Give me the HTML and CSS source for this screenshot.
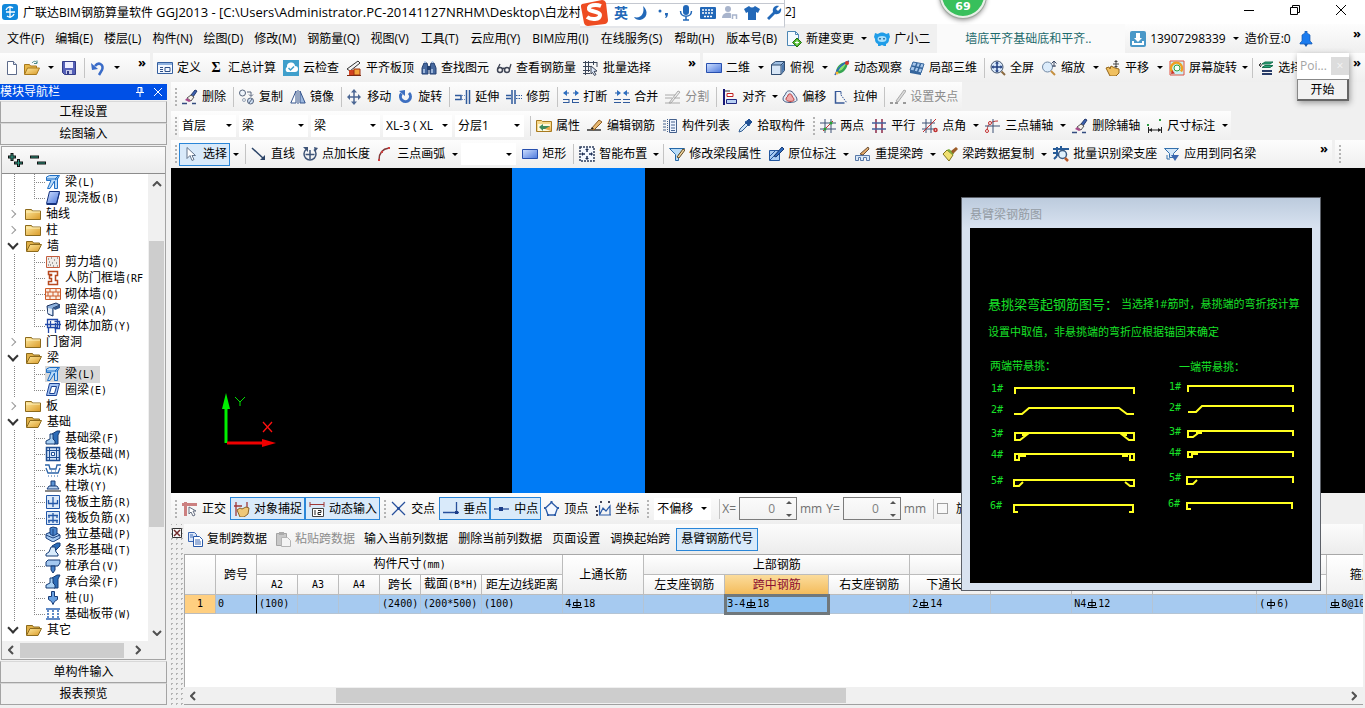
FILE: index.html
```html
<!DOCTYPE html>
<html lang="zh-CN">
<head>
<meta charset="utf-8">
<title>广联达BIM钢筋算量软件 GGJ2013</title>
<link rel="stylesheet" href="styles.css">
</head>
<body>
<svg class="sprite" aria-hidden="true">
  <defs>
    <linearGradient id="gold" x1="0" y1="0" x2="1" y2="1"><stop offset="0" stop-color="#ffeaa0"/><stop offset="1" stop-color="#d99a28"/></linearGradient>
    <linearGradient id="blue" x1="0" y1="0" x2="1" y2="1"><stop offset="0" stop-color="#cfe0ff"/><stop offset="1" stop-color="#4c78dc"/></linearGradient>
  </defs>
  <symbol id="new" viewBox="0 0 16 16"><path d="M3.500 1.500h6l3 3v10h-9z" fill="#fff" stroke="#5d6b8a"/><path d="M9.500 1.500v3h3" fill="#dde6f5" stroke="#5d6b8a"/></symbol>
  <symbol id="open" viewBox="0 0 16 16"><path d="M.5 14V4.500h5l1 1.500h6v3" fill="#e8b84a" stroke="#a8791c"/><path d="M.5 14.500l3-6.500h12l-3 6.500z" fill="url(#gold)" stroke="#a8791c"/><path d="M8 3c2-2.500 4-2 5 0m0-2.500v3h-3" fill="none" stroke="#4a8a8a"/></symbol>
  <symbol id="save" viewBox="0 0 16 16"><path d="M1.500 1.500h13v13h-11l-2-2z" fill="#5560b8" stroke="#333c88"/><path d="M4 2h8v6H4z" fill="#eef"/><path d="M5 10h6v4H5z" fill="#c9cdea"/><path d="M6 11h2v3H6z" fill="#333c88"/></symbol>
  <symbol id="undo" viewBox="0 0 16 16"><path d="M5 6c4-5 9-1 7 4l-3 5" fill="none" stroke="#3a6cc8" stroke-width="2.500"/><path d="M1 3l1 7 6-1z" fill="#3a6cc8"/></symbol>
  <symbol id="define" viewBox="0 0 16 16"><path d="M.5 2.500h15v11H.5z" fill="#f4f8ff" stroke="#355f9f"/><path d="M1 3h14v2H1z" fill="#8fb2e0"/><path d="M3 7.500h3M3 9.500h3M3 11.500h3M8 7.500h5v4H8z" fill="none" stroke="#2d4f86"/></symbol>
  <symbol id="cloud" viewBox="0 0 16 16"><path d="M0 0h16v16H0z" fill="#3f9fcb"/><path d="M4 12a3 3 0 010-5 4 4 0 018-1 3 3 0 010 6z" fill="#fff"/><path d="M5.500 8l2 2 3.500-3.500" fill="none" stroke="#3f9fcb" stroke-width="1.500"/></symbol>
  <symbol id="level" viewBox="0 0 16 16"><path d="M1 9L12 1l2 2-10 8z" fill="#f4f4f4" stroke="#333"/><path d="M3 10h5v5H3z" fill="#d04020"/><path d="M8 9h6v6H8z" fill="#f2a33a" stroke="#9c3010"/><path d="M1 15.500h14" stroke="#7a2a10"/></symbol>
  <symbol id="bino" viewBox="0 0 16 16"><path d="M3 3h3l1 4v7H1V8zM10 3h3l2 5v6H9V7z" fill="#46689e" stroke="#223f70"/><path d="M6 6h4v4H6z" fill="#223f70"/><path d="M3 9v4M11 9v4M4 1v2M11.500 1v2" stroke="#b8cdec" stroke-width="1.500"/></symbol>
  <symbol id="glasses" viewBox="0 0 16 16"><circle cx="4" cy="10" r="2.500" fill="none" stroke="#3e4454" stroke-width="1.500"/><circle cx="11" cy="10" r="2.500" fill="none" stroke="#3e4454" stroke-width="1.500"/><path d="M6 9q1.500-1.500 3 0M1.500 9L4 4M13.500 9L15 4" fill="none" stroke="#3e4454" stroke-width="1.300"/></symbol>
  <symbol id="batch" viewBox="0 0 16 16"><path d="M2.500 1v14M5.500 1v11M0 2.500h14M0 6.500h8M0 10.500h7M0 13.500h7M10.500 1v4M14 2v5" stroke="#3c4658"/><path d="M8 6l6 5-3 .5 2 3-1.500 1-2-3L8 14z" fill="#dfe9f8" stroke="#3c4658"/></symbol>
  <symbol id="rect" viewBox="0 0 16 16"><path d="M.5 3.500h15v9H.5z" fill="url(#blue)" stroke="#274fae"/></symbol>
  <symbol id="cube" viewBox="0 0 16 16"><path d="M1.500 4.500l4-3h9v9l-3.500 4h-9.500z" fill="#9dbde0" stroke="#304c70"/><path d="M1.500 5h9.500v9.500H1.500z" fill="#d7e6f6" stroke="#304c70"/><path d="M11 5l3.500-3.500" stroke="#304c70"/><path d="M12 5l2-2v7l-2 3z" fill="#4c78ae"/></symbol>
  <symbol id="orbit" viewBox="0 0 16 16"><path d="M2 11c1-5 5-9 11-9 2 3-2 10-6 11-2 1-5 0-5-2z" fill="#36a552"/><path d="M4 9c2-4 5-5 8-5-2 3-3 6-7 7z" fill="#8ce070"/><path d="M1 15C4 8 9 3 15 1" fill="none" stroke="#2b62c4" stroke-width="1.500"/><circle cx="13" cy="3" r="2" fill="#d33b2c"/><circle cx="3" cy="13" r="1.500" fill="#f7b52c"/></symbol>
  <symbol id="part3d" viewBox="0 0 16 16"><path d="M4 2l11 2-3 9-11-3z" fill="#a8c8ec" stroke="#35659c"/><path d="M8 3l-3 8M11.500 4l-3 8M3 6l11 2.500" fill="none" stroke="#35659c" stroke-width="1.500"/><path d="M1 10v3l11 2v-2z" fill="#35659c"/></symbol>
  <symbol id="full" viewBox="0 0 16 16"><circle cx="7" cy="7" r="6" fill="#d7e7fa" stroke="#45566e"/><path d="M11.500 11.500L15 15" stroke="#8a6a40" stroke-width="2"/><path d="M7 2.500v9M2.500 7h9" stroke="#223f80" stroke-width="1.500"/><path d="M7 1.500l2 2H5zM7 12.500l2-2H5zM1.500 7l2-2v4zM12.500 7l-2-2v4z" fill="#223f80"/></symbol>
  <symbol id="zoomi" viewBox="0 0 16 16"><circle cx="6.500" cy="7" r="5" fill="#dcecfb" stroke="#7188a4"/><path d="M10 11l4 4" stroke="#c59040" stroke-width="2"/><path d="M13 1v6M10.500 3.500L13 1l2.500 2.500M11 6h4" fill="none" stroke="#3c4a66"/></symbol>
  <symbol id="hand" viewBox="0 0 16 16"><path d="M1 8l3-1 1 2 1-3 2 1 2 1 4 1v4l-3 3H5z" fill="#f0c060" stroke="#94661a"/><path d="M11 1v6M8 4h6" stroke="#444"/><path d="M11 0l2 2H9zM11 8l2-2H9z" fill="#444"/></symbol>
  <symbol id="rot" viewBox="0 0 16 16"><path d="M1 1h14v14H1z" fill="#c9f2f7" stroke="#e05040"/><path d="M3.500 12A5.500 5.500 0 1112 11.500" fill="none" stroke="#f0a020" stroke-width="2.500"/><circle cx="8" cy="8" r="3" fill="#f6fff6" stroke="#30a040"/><path d="M3 10l-1 4 4-.5z" fill="#d03028"/></symbol>
  <symbol id="sel" viewBox="0 0 16 16"><path d="M4 4l3-2h8l-3 2zM4 7.500l3-2h8l-3 2z" fill="#28a878" stroke="#187050"/><path d="M4 11h10M4 14h10" stroke="#283c68" stroke-width="2"/><path d="M1 5h3M1 5l2-2M1 5l2 2" stroke="#333" fill="none"/></symbol>
  <symbol id="brush" viewBox="0 0 16 16"><path d="M9 6l4-5 2 1-4 6z" fill="#3d62b0" stroke="#22386c"/><path d="M5 9l4-3 3 2-3 4z" fill="#f4f0e8" stroke="#555"/><path d="M3 11l2-2 4 3-2 1z" fill="#a84a8a"/><path d="M0 14.500h5M10 14.500h4" stroke="#334c80" stroke-width="1.500"/></symbol>
  <symbol id="copy" viewBox="0 0 16 16"><circle cx="3.500" cy="4" r="3" fill="#eef4fb" stroke="#56647c"/><circle cx="11.500" cy="12" r="3" fill="#cfe0f5" stroke="#56647c"/><path d="M10 14l3-4" stroke="#56647c"/><circle cx="5" cy="11" r="1.500" fill="none" stroke="#9aa6b8"/><path d="M8 3h4v4M10 5.500l2 2 2-2" fill="none" stroke="#56647c"/></symbol>
  <symbol id="mirror" viewBox="0 0 16 16"><path d="M6 2v12H.800z" fill="#fff" stroke="#35548c"/><path d="M10 2v12h5.200z" fill="#9db8de" stroke="#35548c"/><path d="M8 1v14" stroke="#35548c"/></symbol>
  <symbol id="move" viewBox="0 0 16 16"><path d="M7 2v12M1 8h12" stroke="#4c6794" stroke-width="1.500"/><path d="M7 0l3 3.500H4zM7 16l3-3.500H4zM0 8l3-3v6zM14 8l-3-3v6z" fill="#4c6794"/></symbol>
  <symbol id="rotate" viewBox="0 0 16 16"><path d="M3.500 4.500A5 5 0 1011 4" fill="none" stroke="#3d6fc0" stroke-width="3"/><path d="M7 1v6L1 2z" fill="#3d6fc0"/></symbol>
  <symbol id="extend" viewBox="0 0 16 16"><path d="M0 6.500h6v4H0" fill="none" stroke="#2f5a9c" stroke-width="1.500"/><path d="M7 6.500h4M7 10.500h4" stroke="#6f8fc0" stroke-dasharray="1 1"/><path d="M11.500 1v14M14.500 1v14" stroke="#2f5a9c" stroke-width="1.500"/></symbol>
  <symbol id="trim" viewBox="0 0 16 16"><path d="M0 6.500h5M0 9.500h5" stroke="#2f5a9c" stroke-width="1.500"/><path d="M6 1v14M9 1v14" stroke="#2f5a9c" stroke-width="1.500"/><path d="M10 6.500h6M10 9.500h6" stroke="#2f5a9c" stroke-dasharray="1.500 1"/></symbol>
  <symbol id="break" viewBox="0 0 16 16"><path d="M0 10.500h6M0 13.500h6M9 10.500h7M9 13.500h7M6 10v4M9.500 10v4M1 4h5M10 4h5" stroke="#2f5a9c"/><path d="M4 1v6L0 4zM12 1v6l4-3z" fill="#2f6fc0"/></symbol>
  <symbol id="join" viewBox="0 0 16 16"><path d="M0 10.500h7M0 13.500h7M9 10.500h7M9 13.500h7M1 4h5M10 4h5" stroke="#2f5a9c"/><path d="M3 1v6l4-3zM13 1v6L9 4z" fill="#2f6fc0"/></symbol>
  <symbol id="split" viewBox="0 0 16 16"><path d="M0 6h10M0 9h7M0 14h15M9 9h6M4 14l9-12 2 1-9 11z" fill="#eee" stroke="#aaa"/></symbol>
  <symbol id="align" viewBox="0 0 16 16"><path d="M2 0v16" stroke="#181878" stroke-width="2"/><path d="M5 4.500h6v3H5z" fill="#fff" stroke="#c22020"/><path d="M4.500 10.500h10v4h-10z" fill="#b8d0f4" stroke="#202880"/><path d="M3 2h5" stroke="#333"/></symbol>
  <symbol id="offset" viewBox="0 0 16 16"><path d="M1 10c0-3 2-3 3-6s6-3 8 1c1 2 3 3 3 6s-14 4-14-1z" fill="#e4ecf6" stroke="#4a5f84"/><path d="M4 10c0-2 2-2 2-4 1-2 4-1 4 1 1 2 2 2 2 4s-8 2-8-1z" fill="#f0a8a8" stroke="#b83838"/></symbol>
  <symbol id="stretch" viewBox="0 0 16 16"><path d="M2.500 2v12h9" fill="none" stroke="#385a98" stroke-width="1.500"/><path d="M3 2.500h5v3" fill="none" stroke="#385a98"/><path d="M8 6l6 8" stroke="#385a98" stroke-dasharray="1.500 1"/></symbol>
  <symbol id="gripedit" viewBox="0 0 16 16"><path d="M0 14h3M5 14h3M13 14h3" stroke="#999" stroke-width="2"/><path d="M6 12l8-11 2 1-8 11z" fill="#ddd" stroke="#aaa"/></symbol>
  <symbol id="props" viewBox="0 0 16 16"><path d="M.5 2.500h5l1 1h9v10H.5z" fill="#f7d98a" stroke="#a87a20"/><path d="M2 6h12v7H2z" fill="#fff8dc"/><path d="M3 9l4-3v2h7v3H7v2z" fill="#3f8a5c"/><path d="M9 11l5-3 1 5z" fill="#e6a848"/></symbol>
  <symbol id="editrebar" viewBox="0 0 16 16"><path d="M0 12h14" stroke="#333" stroke-width="1.500"/><path d="M4 11l8-9 3 2-8 8z" fill="#e8b870" stroke="#8a5a20"/><path d="M4 11l1-2 2 2z" fill="#222"/></symbol>
  <symbol id="list" viewBox="0 0 16 16"><path d="M7.500 1.500h7v13h-7z" fill="#eef4ff" stroke="#44608c"/><path d="M9 4h4M9 7h4M9 10h4M9 12.500h4M1 3h3M1 6h3M1 9h3M1 12h3" stroke="#44608c"/><path d="M5.500 1v14" stroke="#44608c" stroke-dasharray="1 1"/></symbol>
  <symbol id="pick" viewBox="0 0 16 16"><path d="M2 14l1-3 6-6 2 2-6 6z" fill="#cde4f8" stroke="#345f94"/><path d="M8 4l2-1 2-2 3 3-2 2-1 2z" fill="#1e4f94" stroke="#1e4f94"/></symbol>
  <symbol id="twopt" viewBox="0 0 16 16"><path d="M5 1v14M11 1v14M0 5h16M0 11h16" stroke="#3c5074"/><path d="M3 13L13 3" stroke="#c03030"/><circle cx="5" cy="11" r="1.500" fill="#28a030"/><circle cx="11" cy="5" r="1.500" fill="#28a030"/></symbol>
  <symbol id="parallel" viewBox="0 0 16 16"><path d="M5 1v14M11 1v14" stroke="#8c2a4a" stroke-width="1.500"/><path d="M1 5h14M1 11h14" stroke="#44609c" stroke-width="1.500"/></symbol>
  <symbol id="ptangle" viewBox="0 0 16 16"><path d="M4 1v14M9 1v14M0 5h13M0 11h13" stroke="#3c5074"/><path d="M1 14L14 1" stroke="#c03030"/><circle cx="13.500" cy="12" r="1.500" fill="none" stroke="#c03030" stroke-width="1.500"/></symbol>
  <symbol id="arcax" viewBox="0 0 16 16"><path d="M2 14c0-7 3-11 11-11" fill="none" stroke="#c03030"/><path d="M0 8h15M8 1v14" stroke="#3c5074"/><circle cx="2" cy="13" r="1.500" fill="#fff" stroke="#c03030"/><circle cx="5" cy="5" r="1.500" fill="#fff" stroke="#c03030"/></symbol>
  <symbol id="dim" viewBox="0 0 16 16"><path d="M1.500 9v6M14.500 9v6M1 12h14" stroke="#222"/><path d="M2 12l3-2v4zM14 12l-3-2v4z" fill="#222"/><path d="M0 6h2v2H0zM12 1h2v2h-2z" fill="#2a9c40"/></symbol>
  <symbol id="cursor" viewBox="0 0 16 16"><path d="M4 1.500v11l3-3 2 5 2-1-2-4h3.500z" fill="#fff" stroke="#62748c"/></symbol>
  <symbol id="line" viewBox="0 0 16 16"><path d="M1 2l12 11" stroke="#2c4468" stroke-width="1.500"/><path d="M9 14h5V9z" fill="#2c4468"/></symbol>
  <symbol id="ptlen" viewBox="0 0 16 16"><path d="M4 3.500a6 6 0 108 0M8 4v9M3.500 8.500h9" fill="none" stroke="#3e5478" stroke-width="1.500"/><path d="M1 1h5v5zM12 1l4 1-3 4z" fill="#3e5478"/></symbol>
  <symbol id="arc" viewBox="0 0 16 16"><path d="M2 14C2 7 5 3 12 2" fill="none" stroke="#803a3a" stroke-width="1.500"/><path d="M1 13h2v2H1zM11 1h2v2h-2zM4 5h2v2H4z" fill="#d04040"/></symbol>
  <symbol id="smart" viewBox="0 0 16 16"><path d="M1 1h14v14H1z" fill="#f4f8ff" stroke="#2c3c5c" stroke-width="1.500" stroke-dasharray="2 1"/><path d="M8 3v3M8 10v3M3 8h3M10 8h3" stroke="#1a2c54" stroke-width="1.500"/><path d="M8 2l2 2H6zM8 14l2-2H6zM2 8l2-2v4zM14 8l-2-2v4z" fill="#1a2c54"/></symbol>
  <symbol id="modseg" viewBox="0 0 16 16"><path d="M.5 2.500h15l-6 6v6h-3v-6z" fill="#b8dcf8" stroke="#2468a8"/><path d="M8 11l6-8 2 1-6 8z" fill="#f4d8a0" stroke="#604820"/></symbol>
  <symbol id="inplace" viewBox="0 0 16 16"><path d="M1.500 4.500h10v10h-10z" fill="#a8cdf4" stroke="#2458a0"/><path d="M2 14l9-9M2 10l5-5" stroke="#2458a0"/><path d="M6 10l8-9 2 2-8 8z" fill="#2f6cc0" stroke="#163a74"/></symbol>
  <symbol id="respan" viewBox="0 0 16 16"><path d="M.5 14.500V9.500h14v5h-3v-3h-3v3h-3v-3h-2v3z" fill="#d8e8f8" stroke="#5878a8"/><path d="M5 8l8-7 1 2-6 6z" fill="#e0a868" stroke="#6c5038"/></symbol>
  <symbol id="copyspan" viewBox="0 0 16 16"><path d="M1 8l4-4 6 5-4 6z" fill="#f0e070" stroke="#80741c"/><path d="M5 4l6 5 1-2-5-4z" fill="#7cae3c"/><path d="M9 5l5-4 2 2-5 5z" fill="#9c5c28"/></symbol>
  <symbol id="batchid" viewBox="0 0 16 16"><path d="M0 3h16M4 1v9M8 0v4M0 7h5M4 10l-3 3" stroke="#285c98" stroke-width="2"/><circle cx="9.500" cy="8.500" r="4" fill="#e0f0fc" stroke="#3c5c84" stroke-width="1.500"/><path d="M12 12l3 3" stroke="#b85828" stroke-width="2.500"/></symbol>
  <symbol id="apply" viewBox="0 0 16 16"><path d="M.5 2.500h14l-5 5v4h-4v-4z" fill="#d4e8fa" stroke="#3470ac"/><path d="M7 9h8l-4 6z" fill="#3c68b0"/><path d="M3 9v4h3" fill="none" stroke="#3470ac"/></symbol>
  <symbol id="ortho" viewBox="0 0 16 16"><path d="M3.500 1v14M0 3.500h15" stroke="#cc8080" stroke-width="3"/><path d="M7 6v7l2-2 2 4 2-1-2-4h3z" fill="#fff" stroke="#666e80"/></symbol>
  <symbol id="osnap" viewBox="0 0 16 16"><path d="M2 1v14M0 5h8M13 1v6" stroke="#a03838" stroke-width="1.300"/><path d="M3 9l3-2 2 1 4-2 3 1-1 6-4 3H6z" fill="#f0c878" stroke="#8c6428"/></symbol>
  <symbol id="dyn" viewBox="0 0 16 16"><path d="M1 1v5M15 1v5M1 3.500h14" stroke="#a03838"/><path d="M3.500 7.500h11v8h-11z" fill="#fff" stroke="#444"/><path d="M6 9v5M9 9.500h3v2H9v2h3" fill="none" stroke="#222"/></symbol>
  <symbol id="cross" viewBox="0 0 16 16"><path d="M1 1l13 13M14 1L1 14" stroke="#28509c" stroke-width="1.300"/><path d="M6 6h3v3H6z" fill="#28509c"/></symbol>
  <symbol id="perp" viewBox="0 0 16 16"><path d="M0 11.500h16M13.500 1v11" stroke="#28509c" stroke-width="1.300"/><path d="M12 10h3v3h-3z" fill="#1c3c88"/></symbol>
  <symbol id="mid" viewBox="0 0 16 16"><path d="M0 8h15" stroke="#28509c" stroke-width="1.300"/><path d="M5 6h4v4H5z" fill="#1c3c88"/></symbol>
  <symbol id="vertex" viewBox="0 0 16 16"><path d="M7.500 1.500l6 5.500-2.500 7H4L1.500 7z" fill="#f4f8ff" stroke="#2c5ca8" stroke-width="1.300"/><path d="M6.500 0h2v2h-2zM0 6h2v2H0zM13 6h2v2h-2zM3 13h2v2H3zM10 13h2v2h-2z" fill="#2c5ca8"/></symbol>
  <symbol id="coord" viewBox="0 0 16 16"><path d="M4.500 4v10H16M5 13l3-6 3 3 4-5v9" fill="none" stroke="#2c5ca8" stroke-width="1.200"/><path d="M5 0h2v2H5zM13 0h2v2h-2zM0 5h2v2H0zM1 9h2v2H1zM1 13h2v2H1z" fill="#445"/></symbol>
  <symbol id="pages" viewBox="0 0 16 16"><path d="M1.500 1.500h6l2 2v7h-8z" fill="#dce8fa" stroke="#3c68b4"/><path d="M6.500 5.500h6l3 3v7h-9z" fill="#fff" stroke="#2858a8"/><path d="M8 9h5M8 11h6M8 13h6M3 4h3M3 6h3" stroke="#3c68b4"/></symbol>
  <symbol id="paste" viewBox="0 0 16 16"><path d="M1.500 2.500h10v12h-10z" fill="#c8c8c8" stroke="#a4a4a4"/><path d="M4 1h5v3H4z" fill="#aaa"/><path d="M6.500 6.500h6l3 3v6h-9z" fill="#f4f4f4" stroke="#b4b4b4"/></symbol>
  <symbol id="newchg" viewBox="0 0 16 16"><path d="M1.500.5h8l3 3v11h-11z" fill="#f4faff" stroke="#4c86b4"/><path d="M9.500.5v3h3" fill="none" stroke="#4c86b4"/><path d="M11 7l4.500 4.500L11 16l-4.500-4.500z" fill="#4eb82c" stroke="#237010"/><path d="M9 11.500h4M11 9.500v4" stroke="#fff"/></symbol>
  <symbol id="mascot" viewBox="0 0 16 16"><path d="M1 2l3 1c2-2 6-2 8 0l3-1 1 4-1 2c0 3-1 4-3 5v2h-2l-2-1-2 1H4v-2C2 12 1 11 1 8L0 6z" fill="#209de8"/><ellipse cx="8" cy="8" rx="4.500" ry="3" fill="#a8e0fc"/><path d="M6 7v1.500M10 7v1.500" stroke="#15548c" stroke-width="1.500"/></symbol>
  <symbol id="user" viewBox="0 0 16 16"><rect width="16" height="16" rx="2" fill="#4a98c8"/><path d="M6 2h4v5h2l-4 4-4-4h2zM2 10h2v2h8v-2h2v4H2z" fill="#fff"/></symbol>
  <symbol id="bell" viewBox="0 0 16 16"><path d="M7 0h2v2l3 2v6l2 2v1H2v-1l2-2V4l3-2z" fill="#1b7cf0" stroke="#175ab0" stroke-width=".7"/><path d="M6 13h4l-2 3z" fill="#175ab0"/></symbol>
  <symbol id="folder" viewBox="0 0 16 16"><path d="M.5 3.500h6l1 1.500h8v8.500H.5z" fill="url(#gold)" stroke="#8c6a1c"/><path d="M1 6h14" stroke="#fff2bc"/></symbol>
  <symbol id="foldero" viewBox="0 0 16 16"><path d="M.5 13V3.500h6l1 1.500h6v2" fill="#e0b048" stroke="#8c6a1c"/><path d="M.5 13.500L4 6.500h11.500L12 13.500z" fill="url(#gold)" stroke="#8c6a1c"/></symbol>
  <symbol id="beam" viewBox="0 0 16 16"><path d="M1.500 3l3-1.500h10L12.500 5v9.500h-3V7l-4.500 7.500H2.500L6 6.500H1.500z" fill="#bcdcfa" stroke="#1f6fc4"/><path d="M2 5h8l3-3M10 6l3-2" fill="none" stroke="#1f6fc4"/></symbol>
  <symbol id="slab" viewBox="0 0 16 16"><path d="M4.500 1.500h10l-3 12h-10z" fill="url(#blue)" stroke="#15327c"/><path d="M1.500 14.500h10l3-12" fill="none" stroke="#15327c"/></symbol>
  <symbol id="wall" viewBox="0 0 16 16"><path d="M1.500 2.500h13v11h-13z" fill="#f0ece8" stroke="#c45c3c"/><path d="M3 5h1M6 4h1M9 6h1M12 4h1M4 8h1M7 9h1M11 9h1M3 11h1M8 12h1M12 12h1M5 11h1" stroke="#555"/></symbol>
  <symbol id="rfwall" viewBox="0 0 16 16"><path d="M3.500 1.500h9v4h-2v5h2v4h-9v-3h3v-3h-2v-3h2v-1h-3z" fill="#fff" stroke="#b84a20" stroke-width="1.500"/></symbol>
  <symbol id="brick" viewBox="0 0 16 16"><path d="M.5 2.500h15v11H.5z" fill="#fbeee4" stroke="#cc5a28"/><path d="M0 6h16M0 10h16M5 3v3M11 3v3M3 6v4M8 6v4M13 6v4M5 10v4M11 10v4" stroke="#cc5a28"/></symbol>
  <symbol id="hbeam" viewBox="0 0 16 16"><path d="M2 4l9-3 4 2-7 3v8l-5-2z" fill="#8cb0dc" stroke="#1d3460"/><path d="M3 6l4 1v6l-4-2z" fill="#e4eefa"/><path d="M8 6l7-3v3l-5 2z" fill="#31568c"/></symbol>
  <symbol id="rebar" viewBox="0 0 16 16"><path d="M2.500 1.500h10v8h-10zM0 6.500h16M5.500 3v7M9.500 3.500h5v7h-5M3.500 15v-5M10.500 15V5" fill="none" stroke="#2148a8" stroke-width="1.300"/></symbol>
  <symbol id="ring" viewBox="0 0 16 16"><path d="M4.500 1.500h10l-3 12h-10z" fill="#a4c4f4" stroke="#1b4294"/><path d="M6.500 4.500h5l-2 7h-5z" fill="#fff" stroke="#1b4294"/></symbol>
  <symbol id="fbeam" viewBox="0 0 16 16"><path d="M7 4l5-3h3l-2 4v9H9z" fill="#2c6cb8" stroke="#163c74"/><path d="M1 14v-3l4-2V4h3v5l2 2v3z" fill="#a8d0f4" stroke="#163c74"/></symbol>
  <symbol id="raft" viewBox="0 0 16 16"><path d="M1.500 1.500h13v13h-13z" fill="#d0e2f8" stroke="#1f4f94" stroke-width="1.500"/><path d="M4.500 2v12M11.500 2v12M2 4.500h12M2 11.500h12" stroke="#1f4f94"/><path d="M6.500 6.500h3v3h-3z" fill="#fff" stroke="#1f4f94"/></symbol>
  <symbol id="pit" viewBox="0 0 16 16"><path d="M0 3h4l1 4h6l1-4h4M1 6l2 5h10l2-5" fill="none" stroke="#2c64a8" stroke-width="1.300"/><path d="M3 14h1M6 14h1M9 14h1M12 14h1M6 9h1M10 9h1" stroke="#2c64a8"/></symbol>
  <symbol id="pier" viewBox="0 0 16 16"><path d="M6 3h4v6H6z" fill="#5c94d4" stroke="#183c78"/><path d="M4 8h8l2 3H2z" fill="#b8d4f4" stroke="#183c78"/><path d="M0 12h16v2H0z" fill="#888"/></symbol>
  <symbol id="mainr" viewBox="0 0 16 16"><path d="M1.500 1.500h13v13h-13z" fill="#dceafa" stroke="#2458a8"/><path d="M3.500 6v3.500h9V6M8 3v10" fill="none" stroke="#2458a8" stroke-width="1.300"/></symbol>
  <symbol id="negr" viewBox="0 0 16 16"><path d="M1.500 1.500h13v13h-13z" fill="#dceafa" stroke="#2458a8"/><path d="M3 5.500h10M3 10.500h10M8 3v10M4 5v3M12 5v3M4 10v3M12 10v3" stroke="#2458a8" stroke-width="1.300"/></symbol>
  <symbol id="iso" viewBox="0 0 16 16"><path d="M1 8l7-3 7 4v3l-7 4-7-4z" fill="#a8ccf4" stroke="#193f7c"/><path d="M5 2l3-1 4 1v6l-4 2-3-2z" fill="#4884cc" stroke="#193f7c"/><path d="M8 3v7M1 9l7 3 7-3" fill="none" stroke="#193f7c"/></symbol>
  <symbol id="strip" viewBox="0 0 16 16"><path d="M7 4l5-3h3v3l-5 5v5z" fill="#2c6cb8" stroke="#163c74"/><path d="M1 14v-2l3-2 2-5h4l1 5 2 2v2z" fill="#d8ebfc" stroke="#163c74"/></symbol>
  <symbol id="pcap" viewBox="0 0 16 16"><path d="M1 4l2-2h12v3l-2 3H1z" fill="#a4c8f0" stroke="#173a74"/><path d="M6 8h4v4l-2 3-2-3z" fill="#4884cc" stroke="#173a74"/></symbol>
  <symbol id="pile" viewBox="0 0 16 16"><path d="M6.500 1.500h3v5h3v3l-3 2-1.500 3-1.500-3-3-2v-3h3z" fill="#68a0e0" stroke="#183c78"/></symbol>
  <symbol id="band" viewBox="0 0 16 16"><path d="M1 3h14M1 13h14" stroke="#2c64b4" stroke-width="1.500"/><path d="M3 4v8M8 4v8M13 4v8" stroke="#2c64b4" stroke-dasharray="2 1" stroke-width="1.500"/></symbol>
  <symbol id="hrb" viewBox="0 0 12 12"><path d="M2.500 4.500h7v3h-7zM6 1v9M1 9.500h10" fill="none" stroke="#000"/></symbol>
  <symbol id="hpb" viewBox="0 0 12 12"><path d="M2.500 4.500h7v3h-7zM6 1v10" fill="none" stroke="#000"/></symbol>
</svg>

<div class="app">
  <header class="titlebar">
    <svg class="logo" viewBox="0 0 16 16"><rect width="16" height="16" rx="3" fill="#1289dc"/><path d="M8 2v12M4 6a4.500 4.500 0 017-2M4 8h9M12 10a4.500 4.500 0 01-7 2" fill="none" stroke="#fff" stroke-width="1.300"/></svg>
    <h1>广联达BIM钢筋算量软件 <span>GGJ2013 - [C:\Users\Administrator.PC-20141127NRHM\Desktop\</span>白龙村-</h1>
    <span class="title-end">2]</span>
    <div class="winctl">
      <button aria-label="最小化"><svg viewBox="0 0 12 12"><path d="M1 6.500h10" stroke="#000"/></svg></button>
      <button aria-label="还原"><svg viewBox="0 0 12 12"><path d="M1.500 3.500h7v7h-7zM3.500 3V1.500h7v7H9" fill="none" stroke="#000"/></svg></button>
      <button aria-label="关闭"><svg viewBox="0 0 12 12"><path d="M1 1l10 10M11 1L1 11" stroke="#000"/></svg></button>
    </div>
  </header>

  <nav class="menubar">
    <button>文件(F)</button><button>编辑(E)</button><button>楼层(L)</button><button>构件(N)</button><button>绘图(D)</button><button>修改(M)</button><button>钢筋量(Q)</button><button>视图(V)</button><button class="wide">工具(T)</button><button class="wide">云应用(Y)</button><button class="wide">BIM应用(I)</button><button class="wide">在线服务(S)</button><button class="wide">帮助(H)</button><button class="wide">版本号(B)</button>
    <button class="tb"><svg><use href="#newchg"/></svg>新建变更</button><button class="dd" aria-label="更多"></button>
    <button class="tb"><svg><use href="#mascot"/></svg>广小二</button>
    <a class="news" href="#">墙底平齐基础底和平齐..</a>
    <div class="band account">
      <button class="tb"><svg><use href="#user"/></svg>13907298339</button><button class="dd" aria-label="账户"></button>
      <button class="tb">造价豆:0</button><button class="tb" aria-label="通知"><svg><use href="#bell"/></svg></button>
      <span class="more">»</span>
    </div>
  </nav>

  <div class="row">
    <div class="band files">
      <button class="tb" aria-label="新建"><svg><use href="#new"/></svg></button>
      <button class="tb" aria-label="打开"><svg><use href="#open"/></svg></button><button class="dd" aria-label="最近"></button>
      <button class="tb" aria-label="保存"><svg><use href="#save"/></svg></button><i class="sep"></i>
      <button class="tb" aria-label="撤销"><svg><use href="#undo"/></svg></button><button class="dd" aria-label="撤销列表"></button>
      <span class="more">»</span>
    </div>
    <div class="band tools">
      <button class="tb"><svg><use href="#define"/></svg>定义</button>
      <button class="tb"><b class="sigma">Σ</b>汇总计算</button>
      <button class="tb"><svg><use href="#cloud"/></svg>云检查</button>
      <button class="tb"><svg><use href="#level"/></svg>平齐板顶</button>
      <button class="tb"><svg><use href="#bino"/></svg>查找图元</button>
      <button class="tb"><svg><use href="#glasses"/></svg>查看钢筋量</button>
      <button class="tb"><svg><use href="#batch"/></svg>批量选择</button>
      <span class="more">»</span>
    </div>
    <div class="band views">
      <button class="tb"><svg><use href="#rect"/></svg>二维</button><button class="dd" aria-label="二维选项"></button>
      <button class="tb"><svg><use href="#cube"/></svg>俯视</button><button class="dd" aria-label="俯视选项"></button>
      <button class="tb"><svg><use href="#orbit"/></svg>动态观察</button>
      <button class="tb"><svg><use href="#part3d"/></svg>局部三维</button><i class="sep"></i>
      <button class="tb"><svg><use href="#full"/></svg>全屏</button>
      <button class="tb"><svg><use href="#zoomi"/></svg>缩放</button><button class="dd" aria-label="缩放选项"></button>
      <button class="tb"><svg><use href="#hand"/></svg>平移</button><button class="dd" aria-label="平移选项"></button>
      <button class="tb"><svg><use href="#rot"/></svg>屏幕旋转</button><button class="dd tight" aria-label="旋转选项"></button><i class="sep"></i>
      <button class="tb"><svg><use href="#sel"/></svg>选择</button>
      <span class="more">»</span>
    </div>
  </div>

  <div class="body">
    <aside class="nav">
      <div class="navhead"><span>模块导航栏</span><button aria-label="固定"><svg viewBox="0 0 10 10"><path d="M3 0.500h4v5H3zM6 1v4M1 5.500h8M5 6v4" fill="none" stroke="#fff"/></svg></button><button aria-label="关闭"><svg viewBox="0 0 10 10"><path d="M1 1l8 8M9 1L1 9" stroke="#fff"/></svg></button></div>
      <button class="navbtn">工程设置</button>
      <button class="navbtn">绘图输入</button>
      <div class="treebox">
        <div class="treetools">
          <button aria-label="展开"><svg viewBox="0 0 16 16"><path d="M5 1v8M1 5h8M11.500 7v8M7 11h9" stroke="#111" stroke-width="3"/><path d="M5 2v6M2 5h6M11.500 8v6M8 11h7" stroke="#2f9a84"/></svg></button>
          <button aria-label="折叠"><svg viewBox="0 0 16 16"><path d="M0 5h9M7 11h9" stroke="#111" stroke-width="3"/><path d="M1 5h7M8 11h7" stroke="#2f9a84"/></svg></button>
        </div>
        <div class="treeview">
          <ul class="tree">
            <li><ul>
              <li class="leaf"><svg><use href="#beam"/></svg><span>梁<tt>(L)</tt></span></li>
              <li class="leaf"><svg><use href="#slab"/></svg><span>现浇板<tt>(B)</tt></span></li>
            </ul></li>
            <li class="node"><svg><use href="#folder"/></svg>轴线</li>
            <li class="node"><svg><use href="#folder"/></svg>柱</li>
            <li class="node open"><svg><use href="#foldero"/></svg>墙</li>
            <li><ul>
              <li class="leaf"><svg><use href="#wall"/></svg><span>剪力墙<tt>(Q)</tt></span></li>
              <li class="leaf"><svg><use href="#rfwall"/></svg><span>人防门框墙<tt>(RF</tt></span></li>
              <li class="leaf"><svg><use href="#brick"/></svg><span>砌体墙<tt>(Q)</tt></span></li>
              <li class="leaf"><svg><use href="#hbeam"/></svg><span>暗梁<tt>(A)</tt></span></li>
              <li class="leaf"><svg><use href="#rebar"/></svg><span>砌体加筋<tt>(Y)</tt></span></li>
            </ul></li>
            <li class="node"><svg><use href="#folder"/></svg>门窗洞</li>
            <li class="node open"><svg><use href="#foldero"/></svg>梁</li>
            <li><ul>
              <li class="leaf current"><svg><use href="#beam"/></svg><span>梁<tt>(L)</tt></span></li>
              <li class="leaf"><svg><use href="#ring"/></svg><span>圈梁<tt>(E)</tt></span></li>
            </ul></li>
            <li class="node"><svg><use href="#folder"/></svg>板</li>
            <li class="node open"><svg><use href="#foldero"/></svg>基础</li>
            <li><ul>
              <li class="leaf"><svg><use href="#fbeam"/></svg><span>基础梁<tt>(F)</tt></span></li>
              <li class="leaf"><svg><use href="#raft"/></svg><span>筏板基础<tt>(M)</tt></span></li>
              <li class="leaf"><svg><use href="#pit"/></svg><span>集水坑<tt>(K)</tt></span></li>
              <li class="leaf"><svg><use href="#pier"/></svg><span>柱墩<tt>(Y)</tt></span></li>
              <li class="leaf"><svg><use href="#mainr"/></svg><span>筏板主筋<tt>(R)</tt></span></li>
              <li class="leaf"><svg><use href="#negr"/></svg><span>筏板负筋<tt>(X)</tt></span></li>
              <li class="leaf"><svg><use href="#iso"/></svg><span>独立基础<tt>(P)</tt></span></li>
              <li class="leaf"><svg><use href="#strip"/></svg><span>条形基础<tt>(T)</tt></span></li>
              <li class="leaf"><svg><use href="#pcap"/></svg><span>桩承台<tt>(V)</tt></span></li>
              <li class="leaf"><svg><use href="#fbeam"/></svg><span>承台梁<tt>(F)</tt></span></li>
              <li class="leaf"><svg><use href="#pile"/></svg><span>桩<tt>(U)</tt></span></li>
              <li class="leaf"><svg><use href="#band"/></svg><span>基础板带<tt>(W)</tt></span></li>
            </ul></li>
            <li class="node open"><svg><use href="#foldero"/></svg>其它</li>
          </ul>
          <div class="vscroll"><svg viewBox="0 0 10 6"><path d="M1 5l4-4 4 4"/></svg><i></i><svg viewBox="0 0 10 6"><path d="M1 1l4 4 4-4"/></svg></div>
        </div>
        <div class="hscroll navscroll"><svg viewBox="0 0 6 10"><path d="M5 1L1 5l4 4"/></svg><i></i><svg viewBox="0 0 6 10"><path d="M1 1l4 4-4 4"/></svg></div>
      </div>
      <button class="navbtn">单构件输入</button>
      <button class="navbtn">报表预览</button>
    </aside>

    <main class="work">
      <div class="row">
        <div class="band fit"><i class="grip"></i>
          <button class="tb"><svg><use href="#brush"/></svg>删除</button><i class="sep"></i>
          <button class="tb"><svg><use href="#copy"/></svg>复制</button>
          <button class="tb"><svg><use href="#mirror"/></svg>镜像</button><i class="sep"></i>
          <button class="tb"><svg><use href="#move"/></svg>移动</button>
          <button class="tb"><svg><use href="#rotate"/></svg>旋转</button><i class="sep"></i>
          <button class="tb"><svg><use href="#extend"/></svg>延伸</button>
          <button class="tb"><svg><use href="#trim"/></svg>修剪</button><i class="sep"></i>
          <button class="tb"><svg><use href="#break"/></svg>打断</button>
          <button class="tb"><svg><use href="#join"/></svg>合并</button>
          <button class="tb off"><svg><use href="#split"/></svg>分割</button><i class="sep"></i>
          <button class="tb"><svg><use href="#align"/></svg>对齐</button><button class="dd tight" aria-label="对齐选项"></button>
          <button class="tb"><svg><use href="#offset"/></svg>偏移</button>
          <button class="tb"><svg><use href="#stretch"/></svg>拉伸</button><i class="sep"></i>
          <button class="tb off"><svg><use href="#gripedit"/></svg>设置夹点</button>
        </div>
      </div>
      <div class="row">
        <div class="band fit"><i class="grip"></i>
          <label class="combo narrow"><select aria-label="楼层"><option>首层</option></select></label>
          <label class="combo"><select aria-label="构件类别"><option>梁</option></select></label>
          <label class="combo"><select aria-label="构件类型"><option>梁</option></select></label>
          <label class="combo"><select aria-label="构件"><option>XL-3 ( XL</option></select></label>
          <label class="combo"><select aria-label="分层"><option>分层1</option></select></label><i class="sep"></i>
          <button class="tb"><svg><use href="#props"/></svg>属性</button>
          <button class="tb"><svg><use href="#editrebar"/></svg>编辑钢筋</button>
          <button class="tb"><svg><use href="#list"/></svg>构件列表</button>
          <button class="tb"><svg><use href="#pick"/></svg>拾取构件</button><i class="grip"></i>
          <button class="tb"><svg><use href="#twopt"/></svg>两点</button>
          <button class="tb"><svg><use href="#parallel"/></svg>平行</button>
          <button class="tb"><svg><use href="#ptangle"/></svg>点角</button><button class="dd" aria-label="点角选项"></button>
          <button class="tb"><svg><use href="#arcax"/></svg>三点辅轴</button><button class="dd" aria-label="辅轴选项"></button>
          <button class="tb"><svg><use href="#brush"/></svg>删除辅轴</button>
          <button class="tb"><svg><use href="#dim"/></svg>尺寸标注</button><button class="dd" aria-label="标注选项"></button>
        </div>
      </div>
      <div class="row last">
        <div class="band grow"><i class="grip"></i>
          <button class="tb on"><svg><use href="#cursor"/></svg>选择</button><button class="dd" aria-label="选择方式"></button><i class="sep"></i>
          <button class="tb"><svg><use href="#line"/></svg>直线</button>
          <button class="tb"><svg><use href="#ptlen"/></svg>点加长度</button>
          <button class="tb"><svg><use href="#arc"/></svg>三点画弧</button><button class="dd" aria-label="画弧选项"></button>
          <label class="combo narrow"><select aria-label="半径"><option></option></select></label>
          <button class="tb"><svg><use href="#rect"/></svg>矩形</button><i class="sep"></i>
          <button class="tb"><svg><use href="#smart"/></svg>智能布置</button><button class="dd tight" aria-label="布置选项"></button><i class="sep"></i>
          <button class="tb"><svg><use href="#modseg"/></svg>修改梁段属性</button>
          <button class="tb"><svg><use href="#inplace"/></svg>原位标注</button><button class="dd" aria-label="原位标注选项"></button>
          <button class="tb"><svg><use href="#respan"/></svg>重提梁跨</button><button class="dd" aria-label="梁跨选项"></button>
          <button class="tb"><svg><use href="#copyspan"/></svg>梁跨数据复制</button><button class="dd" aria-label="复制选项"></button>
          <button class="tb"><svg><use href="#batchid"/></svg>批量识别梁支座</button>
          <button class="tb"><svg><use href="#apply"/></svg>应用到同名梁</button>
          <span class="more">»</span>
        </div>
        <div class="band stub"><i class="grip"></i></div>
      </div>

      <section class="canvas" aria-label="绘图区">
        <svg width="100%" height="100%">
          <rect x="341" y="0" width="133" height="100%" fill="#007bf5"/>
          <path d="M55 275v-42" stroke="#00f000" stroke-width="3"/><path d="M55 225l4 16h-8z" fill="#00f000"/>
          <path d="M56 275h40" stroke="#f00000" stroke-width="3"/><path d="M105 275l-14-4v8z" fill="#f00000"/>
          <path d="M64 229l5 5 5-5M69 234v4" fill="none" stroke="#00e000"/>
          <path d="M92 254l9 10M101 254l-9 10" stroke="#ff1010" stroke-width="1.300"/>
        </svg>
      </section>

      <div class="snapbar">
        <div class="band fit"><i class="grip"></i>
          <button class="tb"><svg><use href="#ortho"/></svg>正交</button>
          <button class="tb on"><svg><use href="#osnap"/></svg>对象捕捉</button>
          <button class="tb on"><svg><use href="#dyn"/></svg>动态输入</button><i class="grip"></i>
          <button class="tb"><svg><use href="#cross"/></svg>交点</button>
          <button class="tb on"><svg><use href="#perp"/></svg>垂点</button>
          <button class="tb on"><svg><use href="#mid"/></svg>中点</button>
          <button class="tb"><svg><use href="#vertex"/></svg>顶点</button>
          <button class="tb"><svg><use href="#coord"/></svg>坐标</button><i class="grip"></i>
          <label class="combo narrow"><select aria-label="偏移方式"><option>不偏移</option></select></label><i class="sep"></i>
          <label class="num">X=<span class="spin"><input value="0"><i></i></span>mm</label>
          <label class="num">Y=<span class="spin"><input value="0"><i></i></span>mm</label><i class="sep"></i>
          <label class="check"><input type="checkbox">旋转</label>
        </div>
      </div>

      <section class="bottom">
        <div class="dock"><button aria-label="关闭面板"><svg viewBox="0 0 10 10"><path d="M.5.5h9v9h-9z" fill="#f8f8f8" stroke="#333"/><path d="M2 2l6 6M8 2L2 8" stroke="#702828" stroke-width="1.500"/></svg></button></div>
        <div class="spans">
          <div class="spantools">
            <button class="tb"><svg><use href="#pages"/></svg>复制跨数据</button>
            <button class="tb off"><svg><use href="#paste"/></svg>粘贴跨数据</button>
            <button class="tb txt">输入当前列数据</button>
            <button class="tb txt">删除当前列数据</button>
            <button class="tb txt">页面设置</button>
            <button class="tb txt">调换起始跨</button>
            <button class="tb on">悬臂钢筋代号</button>
          </div>
          <div class="gridwrap">
            <table>
              <colgroup><col class="c-no"><col class="c-s"><col class="c-s"><col class="c-s"><col class="c-s"><col class="c-s"><col class="c-sec"><col class="c-m"><col class="c-m"><col class="c-m"><col class="c-mid"><col class="c-m"><col class="c-m"><col class="c-m"><col class="c-m"><col class="c-mid"><col class="c-l"><col class="c-l"></colgroup>
              <thead>
                <tr><th rowspan="2"></th><th rowspan="2">跨号</th><th colspan="6">构件尺寸<tt>(mm)</tt></th><th rowspan="2">上通长筋</th><th colspan="3">上部钢筋</th><th colspan="2"></th><th colspan="3"></th><th rowspan="2">箍筋</th></tr>
                <tr><th><tt>A2</tt></th><th><tt>A3</tt></th><th><tt>A4</tt></th><th>跨长</th><th>截面<tt>(B*H)</tt></th><th>距左边线距离</th><th>左支座钢筋</th><th class="hot">跨中钢筋</th><th>右支座钢筋</th><th>下通长筋</th><th></th><th></th><th></th><th></th></tr>
              </thead>
              <tbody>
                <tr><th>1</th><td class="key">0</td><td>(100)</td><td></td><td></td><td>(2400)</td><td>(200*500)</td><td>(100)</td><td>4<svg><use href="#hrb"/></svg>18</td><td></td><td class="sel">3-4<svg><use href="#hrb"/></svg>18</td><td></td><td>2<svg><use href="#hrb"/></svg>14</td><td></td><td>N4<svg><use href="#hrb"/></svg>12</td><td></td><td>(<svg><use href="#hpb"/></svg>6)</td><td><svg><use href="#hrb"/></svg>8@100</td></tr>
              </tbody>
            </table>
          </div>
          <div class="hscroll gridscroll"><svg viewBox="0 0 6 10"><path d="M5 1L1 5l4 4"/></svg><i></i><svg viewBox="0 0 6 10"><path d="M1 1l4 4-4 4"/></svg></div>
        </div>
      </section>
    </main>
  </div>

  <section class="dialog" aria-label="悬臂梁钢筋图">
    <h2>悬臂梁钢筋图</h2>
    <svg class="diagram" viewBox="0 0 342 355">
      <g fill="#18e028" font-size="11">
        <text x="18" y="81" font-size="13">悬挑梁弯起钢筋图号：</text>
        <text x="151" y="80">当选择1#筋时，悬挑端的弯折按计算</text>
        <text x="18" y="108">设置中取值，非悬挑端的弯折应根据锚固来确定</text>
        <text x="20" y="142">两端带悬挑：</text><text x="209" y="143">一端带悬挑：</text>
        <g class="mono"><text x="21" y="164">1#</text><text x="21" y="185">2#</text><text x="21" y="209">3#</text><text x="21" y="230">4#</text><text x="21" y="256">5#</text><text x="20" y="281">6#</text>
        <text x="199" y="162">1#</text><text x="199" y="183">2#</text><text x="199" y="207">3#</text><text x="199" y="228">4#</text><text x="199" y="253">5#</text><text x="198" y="279">6#</text></g>
      </g>
      <g fill="none" stroke="#ffff20" stroke-width="2">
        <path d="M45 166v-6h119v6M44 186h8l7-6h90l8 6h7"/>
        <path d="M45 201v7h5l9-7M44 201h121M164 201v7h-5l-9-7M52 203h6M151 203h6" transform="translate(0 4)"/>
        <path d="M45 222v6h4v-6M44 222h121M164 222v6h-4v-6M50 224h6M158 224h-6" transform="translate(0 4)"/>
        <path d="M53 254l-4 4h-5v-6h120v6h-4l-5-4M48 284h-4v-7h119v7h-4"/>
        <path d="M218 164v-6h105v6M218 184h8l6-6h91v6"/>
        <path d="M323 208v-5H218v6h5l8-6M232 205h-6M323 229v-5H218v5h4v-5M222 226h6"/>
        <path d="M323 255v-6H217v7h6l4-4M221 281h-4v-6h105v6"/>
      </g>
    </svg>
  </section>

  <div class="ime">
    <svg class="sogou" viewBox="0 0 28 28"><path d="M2 5L22 1q3 0 4 3l2 17q0 3-3 4L8 27q-3 0-4-3L1 8q-.5-2 1-3z" fill="#ee4c22"/><path d="M21 7c-5-2-13-1-12 3 1 3 11 2 11 6 0 5-9 5-13 2" fill="none" stroke="#fff" stroke-width="4"/></svg>
    <b>英</b>
    <svg viewBox="0 0 16 16"><path d="M9 1c6 5 4 13-3 14-3 0-5-1-6-3 7 2 11-4 9-11z" fill="#2268b8"/></svg>
    <svg viewBox="0 0 16 16"><circle cx="4" cy="6" r="1.500" fill="#2268b8"/><path d="M9 8h3c0 3-1 5-3 5l1-2-1-1z" fill="#2268b8"/></svg>
    <svg viewBox="0 0 16 16"><rect x="5" y="0" width="6" height="10" rx="3" fill="#2268b8"/><path d="M2.500 6c0 7 11 7 11 0M8 11v4M5 15h6" fill="none" stroke="#2268b8" stroke-width="1.500"/></svg>
    <svg viewBox="0 0 16 16"><rect x="0" y="2" width="16" height="12" rx="1" fill="#2268b8"/><path d="M2 5h12M2 8h12M4 11.500h8" stroke="#fff" stroke-width="1.500" stroke-dasharray="2 1"/></svg>
    <svg viewBox="0 0 16 16"><circle cx="6" cy="4" r="3" fill="#a8b4cc"/><path d="M0 13c0-7 12-7 12 0z" fill="#a8b4cc"/><path d="M9 8h7v7H9z" fill="#fff"/><path d="M10.500 14v-4h4v4" fill="none" stroke="#a8b4cc" stroke-width="1.500"/></svg>
    <svg viewBox="0 0 16 16"><path d="M5 1q3 3 6 0l5 3-2 4-2-1v8H4V7L2 8 0 4z" fill="#2268b8"/></svg>
    <svg viewBox="0 0 16 16"><path d="M1 13l6-6c-1-4 2-7 6-6l-3 3 2 2 3-3c1 4-2 7-6 6l-6 6z" fill="#2268b8"/></svg>
  </div>

  <div class="ball">69</div>

  <div class="popup"><div class="poptitle"><span>Poi...</span><button aria-label="关闭">×</button></div><button class="start">开始</button></div>
</div>
</body>
</html>
```
FILE: styles.css
```css
* { box-sizing: border-box; }
body {
  margin: 0;
  background: #f0f0f0;
  color: #000;
  font: 12px/16px "Open Sans", "Noto Sans CJK SC", sans-serif;
  overflow: hidden;
}
button, select, input { font: inherit; color: inherit; border: 0; background: none; padding: 0; margin: 0; border-radius: 0; }
ul { list-style: none; margin: 0; padding: 0; }
tt { font: 10px/16px "DejaVu Sans Mono", monospace; }
.sprite { position: absolute; width: 0; height: 0; }
.app { display: flex; flex-direction: column; height: 100vh; position: relative; }

/* title bar */
.titlebar { display: flex; align-items: center; height: 24px; background: #fff; padding-left: 2px; flex: none; }
.logo { width: 16px; height: 16px; margin-right: 5px; flex: none; }
.titlebar h1 { margin: 0; font-size: 12px; font-weight: 400; line-height: 16px; white-space: nowrap; width: 562px; }
.titlebar h1 span { font-size: 13px; }
.title-end { margin-left: 200px; }
.winctl { margin-left: auto; display: flex; gap: 34px; padding: 0 18px 4px 0; }
.winctl button, .winctl svg { display: block; width: 12px; height: 12px; }

/* bars */
.menubar, .row { display: flex; align-items: stretch; height: 29px; flex: none; white-space: nowrap; }
.menubar > button { padding: 0 6px 0 5px; flex: none; }
.menubar > button.wide { padding: 0 6px; }
.menubar { padding-left: 2px; }
.menubar > button.tb { padding: 0 3px; }
.menubar > button.dd { padding: 0; width: 14px; }
.news { flex: 0 0 188px; margin-left: 4px; background: #fafafa; color: #1d6a6c; text-decoration: none; display: flex; align-items: center; padding-left: 28px; }
.row { gap: 3px; }
.row.last { height: 28px; }
.band { display: flex; align-items: center; background: linear-gradient(#fdfdfd, #efefef); min-width: 0; }
.account { flex: 1; padding-left: 2px; }
.files { flex: 0 0 150px; padding-left: 1px; }
.tools { flex: 0 0 547px; padding-left: 1px; }
.views { flex: 1; }
.fit { flex: 0 0 auto; }
.grow { flex: 1; }
.stub { width: 30px; }
.tb { display: flex; align-items: center; gap: 4px; padding: 0 4px 0 3px; height: 22px; flex: none; white-space: nowrap; border: 1px solid transparent; border-width: 1px 0; }
.menubar .tb { height: auto; }
.tb svg { width: 16px; height: 16px; flex: none; }
.files .tb:first-child { padding-right: 1px; }
.tb.off { color: #8c8c8c; }
.tb.on { background: #d9eafa; border: 1px solid #2a86d8; padding: 0 2px 0 3px; height: 23px; }
.sigma { width: 16px; text-align: center; font: bold 14px/16px "Liberation Serif", serif; }
.dd { width: 12px; height: 22px; flex: none; display: flex; align-items: center; justify-content: center; }
.menubar .dd { height: auto; }
.dd::before, .combo::after { content: ""; border: 3px solid transparent; border-top-color: #000; border-bottom: 0; }
.dd.tight { width: 9px; }
.files .dd { width: 14px; }
.views .dd { width: 13px; }
.views .dd.tight { width: 8px; }
.sep { width: 1px; height: 20px; background: #c4c4c4; margin: 0 2px 0 3px; flex: none; }
.grip { width: 2px; height: 18px; margin: 0 2px 0 4px; flex: none; background: repeating-linear-gradient(#b4b4b4 0 2px, transparent 2px 4px); }
.more { margin: 0 4px 12px auto; font: bold 13px/16px "Open Sans", sans-serif; }
.combo { display: flex; align-items: center; width: 69px; margin-right: 3px; flex: none; height: 22px; background: #fff; }
.combo::after { margin: 0 4px; flex: none; }
.combo.narrow { width: 57px; }
.grow .combo.narrow { width: 55px; }
.combo select { flex: 1; min-width: 0; height: 22px; appearance: none; padding-left: 3px; overflow: hidden; }

/* navigation panel */
.body { display: flex; flex: 1; min-height: 0; gap: 4px; padding-bottom: 3px; }
.nav { flex: 0 0 165px; display: flex; flex-direction: column; padding-top: 2px; }
.navhead { background: #0050e6; color: #fff; height: 16px; display: flex; align-items: center; gap: 8px; padding-right: 4px; margin-bottom: 1px; flex: none; }
.navhead span { flex: 1; }
.navhead button, .navhead svg { display: block; width: 10px; height: 10px; }
.navbtn { height: 22px; border: 1px solid #a4a4a4; border-top-color: #d8d8d8; background: #f0f0f0; flex: none; }
.treebox { flex: 1; min-height: 0; display: flex; flex-direction: column; border: 1px solid #a4a4a4; margin: 1px; background: #f0f0f0; }
.treetools { height: 27px; display: flex; align-items: center; gap: 7px; padding-left: 5px; flex: none; background: linear-gradient(#fafafa, #ececec); border-bottom: 1px solid #8c8c8c; }
.treetools button, .treetools svg { display: block; width: 16px; height: 16px; }
.treeview { flex: 1; min-height: 0; display: flex; background: #fff; overflow: hidden; }
.tree { flex: 1; min-width: 0; overflow: hidden; white-space: nowrap; }
.tree svg { width: 16px; height: 16px; flex: none; }
.tree ul { background: repeating-linear-gradient(#888 0 1px, transparent 1px 2px) 12px 0 / 1px 100% no-repeat, repeating-linear-gradient(#888 0 1px, transparent 1px 2px) 32px 0 / 1px calc(100% - 8px) no-repeat; }
.node, .leaf { display: flex; align-items: center; height: 16px; }
.node { gap: 5px; }
.node::before { content: ""; width: 5px; height: 5px; border: solid #999; border-width: 1px 1px 0 0; transform: rotate(45deg); margin: 0 5px 0 7px; flex: none; }
.node.open::before { border-color: #333; border-width: 0 2px 2px 0; width: 6px; height: 6px; margin: 0 4px 4px 7px; }
.leaf::before { content: ""; width: 11px; margin-left: 32px; border-top: 1px dotted #888; flex: none; }
.leaf span { padding: 0 5px 0 4px; }
.leaf svg + span { line-height: 16px; }
.leaf.current svg, .leaf.current span { background: #d9d9d9; }
.vscroll { width: 17px; background: #f0f0f0; display: flex; flex-direction: column; align-items: center; padding: 7px 0 5px; flex: none; }
.vscroll svg { width: 10px; height: 6px; }
.vscroll i { width: 15px; background: #cdcdcd; margin: 54px 0 103px; flex: 1; }
.vscroll path, .hscroll path { fill: none; stroke: #505050; stroke-width: 2; }
.hscroll { display: flex; align-items: center; height: 18px; background: #f0f0f0; flex: none; }
.hscroll svg { width: 6px; height: 10px; }
.hscroll i { background: #cdcdcd; height: 15px; }
.navscroll { padding: 0 24px 0 6px; }
.navscroll i { flex: 1; margin: 0 11px 0 6px; }

/* work area */
.work { flex: 1; min-width: 0; display: flex; flex-direction: column; }
.canvas { flex: 1; min-height: 0; background: #000; }
.canvas svg { display: block; }
.snapbar { height: 31px; flex: none; display: flex; white-space: nowrap; }
.snapbar .combo { margin: 0 5px 0 3px; }
.num { display: flex; align-items: center; gap: 3px; color: #707070; margin-right: 4px; }
.spin { display: flex; width: 58px; height: 23px; border: 1px solid #7c7c7c; padding-right: 4px; align-items: center; }
.spin input { flex: 1; min-width: 0; width: 20px; text-align: right; padding-right: 11px; color: #808080; }
.spin i { width: 6px; height: 16px; display: flex; flex-direction: column; justify-content: space-between; }
.spin i::before, .spin i::after { content: ""; border: 3px solid transparent; }
.spin i::before { border-top: 0; border-bottom-color: #555; }
.spin i::after { border-bottom: 0; border-top-color: #555; }
.check { display: flex; align-items: center; gap: 8px; padding-left: 1px; }
.check input { appearance: none; width: 11px; height: 11px; border: 1px solid #a0a0a0; background: #f8f8f8; }

.bottom { height: 181px; flex: none; display: flex; }
.dock { width: 13px; flex: none; padding: 4px 1px 0; background: radial-gradient(#b4b4b4 1px, transparent 1px) 3px 12px / 5px 5px; }
.dock button, .dock svg { display: block; width: 10px; height: 10px; }
.spans { flex: 1; min-width: 0; display: flex; flex-direction: column; background: #fff; margin-right: 2px; }
.spantools { display: flex; align-items: center; height: 30px; flex: none; background: linear-gradient(#fcfcfc, #ececec); }
.spantools .tb + .tb { margin-left: 1px; }
.spantools .txt { padding: 0 5px 0 4px; }
.spantools .tb.on { padding: 0 4px; }
.gridwrap { flex: 1; min-height: 0; overflow: hidden; border: 1px solid #a8a8a8; border-width: 1px 0 0 1px; }
table { border-collapse: separate; border-spacing: 0; table-layout: fixed; width: 1212px; }
.c-no { width: 31px; } .c-s { width: 41px; } .c-sec { width: 61px; } .c-m { width: 81px; } .c-mid { width: 104px; } .c-l { width: 70px; }
th { font-weight: 400; height: 19px; line-height: 16px; padding: 1px 0; background: linear-gradient(#fff, #f0f0f0); border: solid #bcbcbc; border-width: 0 1px 1px 0; overflow: hidden; white-space: nowrap; }
th.hot { background: linear-gradient(#fbdc9c, #f4bc5c); color: #8c1030; }
tbody th { background: #ffcf80; text-align: center; font: 10px/16px "DejaVu Sans Mono", monospace; }
td { height: 19px; padding: 1px 0 1px 2px; background: #a6caf0; border: solid #b4c4d4; border-width: 0 1px 1px 0; font: 10px/16px "DejaVu Sans Mono", monospace; overflow: hidden; white-space: nowrap; }
td svg { width: 12px; height: 12px; vertical-align: middle; }
td.key { border-right-color: #000; }
td.sel { background: #8cc0f0; outline: 3px solid #70787c; outline-offset: -2px; }
.gridscroll { padding: 0 6px; border-bottom: 1px solid #a0a0a0; }
.gridscroll svg:first-child { margin-right: 140px; }
.gridscroll i { flex: 0 0 510px; }
.gridscroll svg:last-child { margin-left: auto; }

/* floating windows */
.dialog { position: absolute; left: 961px; top: 197px; width: 360px; border: 1px solid #5c6068; background: linear-gradient(#bccbdd, #d8e2f0 30px); padding: 9px 8px 7px; }
.dialog h2 { margin: 0 0 5px; font-size: 12px; line-height: 16px; font-weight: 400; color: #949ca4; }
.diagram { display: block; width: 342px; background: #000; }
.diagram .mono { font-family: "DejaVu Sans Mono", monospace; font-size: 10px; }
.ime { position: absolute; left: 580px; top: 0; height: 28px; display: flex; align-items: center; gap: 6px; color: #2268b8; padding-right: 2px; background: linear-gradient(#c4c8d0, #c4c8d0) 8px 3px / 198px 1px no-repeat, linear-gradient(#fff, #fff); border-bottom: 2px solid #e4e6ea; border-right: 1px solid #c4c8d0; }
.ime svg { width: 16px; height: 16px; }
.ime .sogou { width: 28px; height: 28px; }
.ime b { font-size: 14px; }
.ball { position: absolute; left: 940px; top: -28px; width: 46px; height: 46px; border-radius: 50%; background: #38c05c; border: 2px solid #e8f0e8; box-shadow: 0 0 0 1px #a0a8a0, 0 2px 5px #888; color: #fff; font: bold 11px/16px "DejaVu Sans", sans-serif; text-align: center; padding-top: 25px; }
.popup { position: absolute; left: 1297px; top: 53px; width: 52px; box-shadow: 1px 2px 6px #999; background: #fff; }
.poptitle { display: flex; align-items: center; justify-content: space-between; height: 26px; padding-left: 3px; color: #a4a4a4; }
.poptitle button { width: 18px; height: 18px; background: #dcdcdc; color: #f4f4f4; }
.start { display: block; width: 100%; height: 22px; background: #f2f2f2; border: 1px solid #888; border-width: 1px 2px 2px 1px; border-color: #888 #666 #666 #888; }
```
